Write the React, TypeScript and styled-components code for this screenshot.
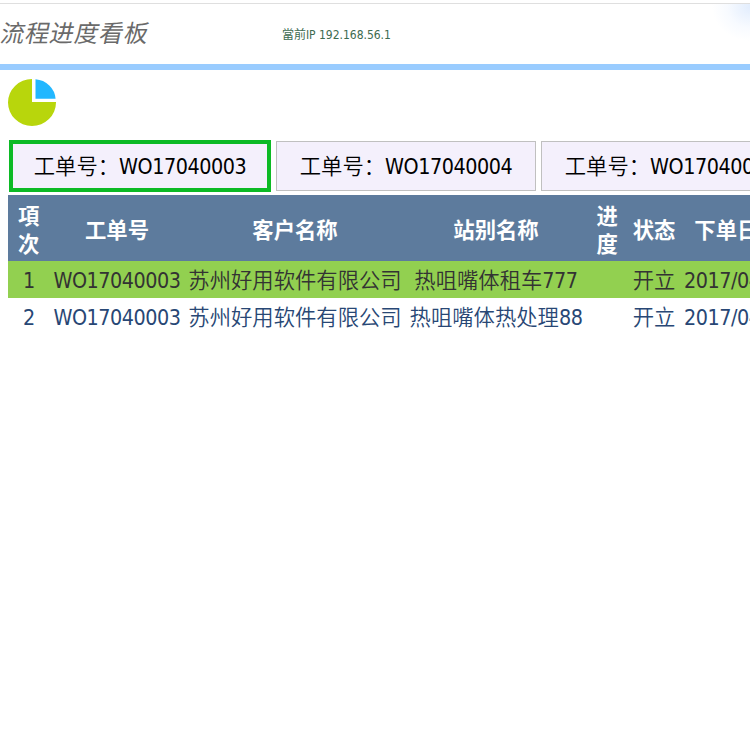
import React from "react";
import styled, { createGlobalStyle } from "styled-components";

const GlobalStyle = createGlobalStyle`
  *, *::before, *::after { box-sizing: border-box; }
  html, body { margin: 0; background: #fff; overflow: hidden; }
  body { font-family: "Noto Sans", "Noto Sans CJK SC", sans-serif; font-size: 21.33px; }
`;

const Page = styled.div`
  width: 100%;
  height: 100vh;
  overflow: hidden;
`;

const Header = styled.header`
  display: flex;
  height: 70px;
  padding-top: 3px;
  border-bottom: 6px solid #99ccff;
  background:
    linear-gradient(#dfdfdf, #dfdfdf) 0 3px / 100% 1px no-repeat,
    radial-gradient(ellipse 38px 34px at 100% 4px, #e2edfd, rgba(240, 246, 255, 0.5) 60%, rgba(255, 255, 255, 0)) 0 3px / 100% 100% no-repeat;
  background-clip: padding-box;
`;

const Title = styled.h1`
  width: 281px;
  margin: 0 0 0 1px;
  font: 400 24px/57px "Noto Sans CJK SC", sans-serif;
  letter-spacing: 0.7px;
  color: #6a6a6a;
  white-space: nowrap;
  transform: skewX(-12deg);
`;

const Address = styled.div`
  font-family: "DejaVu Sans Condensed", "DejaVu Sans", "Noto Sans CJK TC", sans-serif;
  font-stretch: condensed;
  font-size: 12px;
  line-height: 64px;
  letter-spacing: -0.02px;
  color: #3d6b50;
  white-space: nowrap;
`;

const Toolbar = styled.div`
  height: 70px;
  padding: 9px 8px 0;
  svg { display: block; }
`;

const Tabs = styled.nav`
  display: flex;
  align-items: center;
  gap: 5px;
  height: 52px;
  margin-left: 9px;
`;

const Tab = styled.button<{ $active?: boolean }>`
  flex: none;
  display: flex;
  align-items: center;
  justify-content: center;
  width: ${(p) => (p.$active ? 262 : 260)}px;
  height: ${(p) => (p.$active ? 52 : 50)}px;
  padding: 0;
  border: ${(p) => (p.$active ? "4px solid #0cba25" : "1px solid #c0c0c0")};
  background: #f4f0fc;
  color: #000;
  font: inherit;
  line-height: 30px;
  white-space: nowrap;
`;

const Latin = styled.span`
  padding-top: 2px;
  font-family: "DejaVu Sans Condensed", "DejaVu Sans", sans-serif;
  font-stretch: condensed;
  letter-spacing: -0.45px;
`;

const Label = styled.span`
  padding-bottom: 2px;
  font-family: "Noto Sans CJK SC", sans-serif;
  font-weight: 350;
`;

const Table = styled.div`
  width: 789px;
  margin: 3px 0 0 8px;
`;

const Row = styled.div<{ $kind: "head" | "selected" | "plain" }>`
  display: grid;
  grid-template-columns: 42px 134px 222px 180px 43px 50px 116px;
  align-items: center;
  justify-items: center;
  height: ${(p) => (p.$kind === "head" ? 66 : 37)}px;
  padding-top: ${(p) => (p.$kind === "head" ? 4 : 0)}px;
  background: ${(p) => ({ head: "#5d7b9d", selected: "#92d050", plain: "#fff" })[p.$kind]};
  color: ${(p) => ({ head: "#fff", selected: "#333", plain: "#284775" })[p.$kind]};
`;

const HeadCell = styled.div<{ $narrow?: boolean }>`
  width: ${(p) => (p.$narrow ? "22px" : "auto")};
  font-weight: 700;
  line-height: 28.5px;
  white-space: ${(p) => (p.$narrow ? "normal" : "nowrap")};
`;

const Cell = styled.div`
  display: flex;
  line-height: 34px;
  white-space: nowrap;
`;

const orders = ["WO17040003", "WO17040004", "WO17040005"];
const columns = ["項次", "工单号", "客户名称", "站别名称", "进度", "状态", "下单日期"];
const rows = [
  { id: 1, station: "热咀嘴体租车", code: "777" },
  { id: 2, station: "热咀嘴体热处理", code: "88" },
];

export default function App() {
  return (
    <Page>
      <GlobalStyle />
      <Header>
        <Title>流程进度看板</Title>
        <Address>當前IP 192.168.56.1</Address>
      </Header>
      <Toolbar>
        <svg width="48" height="48" viewBox="0 0 48 48">
          <path d="M24 0A24 23.5 0 1 0 48 23.5V23H24Z" fill="#b8d60c" />
          <path d="M27.5 .3A22 21 0 0 1 47.6 19.7H27.5Z" fill="#22b7ff" />
        </svg>
      </Toolbar>
      <Tabs>
        {orders.map((order, i) => (
          <Tab key={order} $active={i === 0}>
            <Label>工单号：</Label>
            <Latin>{order}</Latin>
          </Tab>
        ))}
      </Tabs>
      <Table>
        <Row $kind="head">
          {columns.map((name) => (
            <HeadCell key={name} $narrow={name === "項次" || name === "进度"}>
              {name}
            </HeadCell>
          ))}
        </Row>
        {rows.map((row) => (
          <Row key={row.id} $kind={row.id === 1 ? "selected" : "plain"}>
            <Cell><Latin>{row.id}</Latin></Cell>
            <Cell><Latin>WO17040003</Latin></Cell>
            <Cell><Label>苏州好用软件有限公司</Label></Cell>
            <Cell><Label>{row.station}</Label><Latin>{row.code}</Latin></Cell>
            <Cell />
            <Cell><Label>开立</Label></Cell>
            <Cell><Latin>2017/04/12</Latin></Cell>
          </Row>
        ))}
      </Table>
    </Page>
  );
}
